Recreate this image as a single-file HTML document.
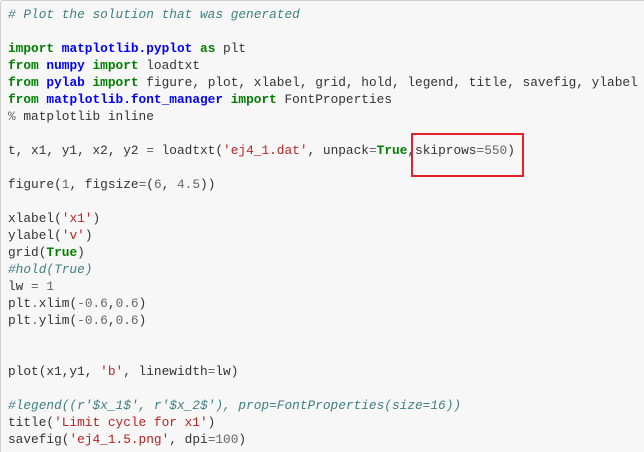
<!DOCTYPE html>
<html><head><meta charset="utf-8"><style>
html,body{margin:0;padding:0;background:#fff;width:644px;height:452px;overflow:hidden;}
.cell{position:absolute;left:0;top:0;width:644px;height:452px;background:#f7f7f7;border:1px solid #cfcfcf;border-right:none;border-bottom:none;border-radius:3px 0 0 0;box-sizing:border-box;}
pre{position:absolute;left:8px;top:6px;margin:0;font-family:"Liberation Mono",monospace;font-size:12.8px;line-height:17px;color:#333;}
.c{color:#408080;font-style:italic}.k{color:#008000;font-weight:bold}.n{color:#0000ff;font-weight:bold}.s{color:#ba2121}.m{color:#666}.o{color:#666}
.box{position:absolute;left:411px;top:133px;width:113px;height:44px;border:2px solid #e8202a;box-sizing:border-box;}
</style></head><body>
<div class="cell"></div>
<pre><span class="c"># Plot the solution that was generated</span>

<span class="k">import</span> <span class="n">matplotlib.pyplot</span> <span class="k">as</span> plt
<span class="k">from</span> <span class="n">numpy</span> <span class="k">import</span> loadtxt
<span class="k">from</span> <span class="n">pylab</span> <span class="k">import</span> figure, plot, xlabel, grid, hold, legend, title, savefig, ylabel
<span class="k">from</span> <span class="n">matplotlib.font_manager</span> <span class="k">import</span> FontProperties
<span class="o">%</span> matplotlib inline

t, x1, y1, x2, y2 <span class="o">=</span> loadtxt(<span class="s">'ej4_1.dat'</span>, unpack<span class="o">=</span><span class="k">True</span>,skiprows<span class="o">=</span><span class="m">550</span>)

figure(<span class="m">1</span>, figsize<span class="o">=</span>(<span class="m">6</span>, <span class="m">4.5</span>))

xlabel(<span class="s">'x1'</span>)
ylabel(<span class="s">'v'</span>)
grid(<span class="k">True</span>)
<span class="c">#hold(True)</span>
lw <span class="o">=</span> <span class="m">1</span>
plt<span class="o">.</span>xlim(<span class="o">-</span><span class="m">0.6</span>,<span class="m">0.6</span>)
plt<span class="o">.</span>ylim(<span class="o">-</span><span class="m">0.6</span>,<span class="m">0.6</span>)


plot(x1,y1, <span class="s">'b'</span>, linewidth<span class="o">=</span>lw)

<span class="c">#legend((r'$x_1$', r'$x_2$'), prop=FontProperties(size=16))</span>
title(<span class="s">'Limit cycle for x1'</span>)
savefig(<span class="s">'ej4_1.5.png'</span>, dpi<span class="o">=</span><span class="m">100</span>)</pre>
<div class="box"></div>
</body></html>
